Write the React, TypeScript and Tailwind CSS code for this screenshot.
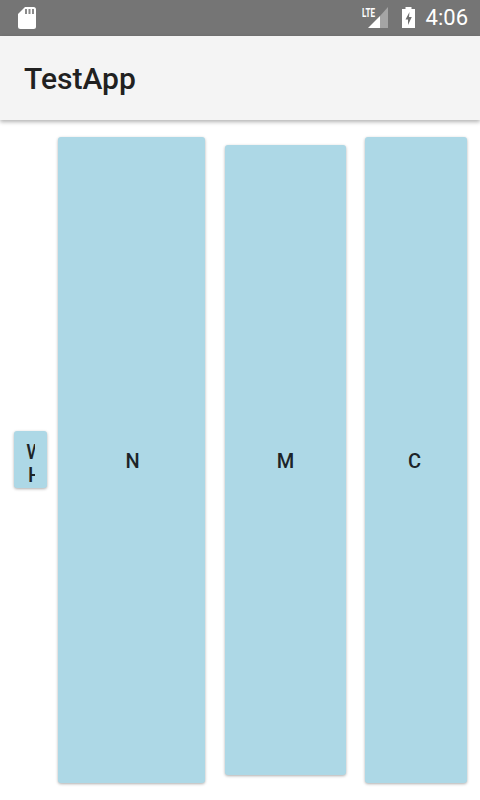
export default function App() {
  const cardBase = "flex items-center justify-center rounded-[3px] bg-[#add8e6] shadow-[0_1px_3px_rgba(0,0,0,0.32)] text-[#1c2428] text-[20px] font-medium leading-[28px]";
  return (
    <div className="flex h-[800px] w-[480px] flex-col overflow-hidden bg-white" style={{ fontFamily: "Roboto, sans-serif" }}>
      <div className="flex h-9 shrink-0 items-center bg-[#757575] text-white">
        <svg className="ml-[18px]" width="18" height="22" viewBox="0 0 18 22">
          <path d="M7 0H15.5Q18 0 18 2.5V19.5Q18 22 15.5 22H2.5Q0 22 0 19.5V7Z" fill="#fff" />
          <rect x="7" y="2" width="2" height="5" fill="#8a8a8a" />
          <rect x="10.5" y="2" width="2" height="5" fill="#8a8a8a" />
          <rect x="14" y="2" width="2" height="5" fill="#8a8a8a" />
        </svg>
        <div className="ml-auto flex items-center">
          <svg width="26" height="21" viewBox="0 0 26 21" className="mr-[14px] mt-[-1px]">
            <path d="M26 0V21H18V9Z" fill="#fff" fillOpacity="0.35" />
            <path d="M18 9V21H6Z" fill="#fff" />
            <text x="0" y="10" fontSize="13" fontWeight="700" fill="#fff" textLength="13" lengthAdjust="spacingAndGlyphs" fontFamily="Roboto, sans-serif">LTE</text>
          </svg>
          <svg width="13" height="21" viewBox="0 0 13 21" className="mr-[11px] mt-[-1px]">
            <path d="M3.5 0H9.5V2H13V21H0V2H3.5Z" fill="#fff" />
            <path d="M7.5 5L3.5 12.5H6V18L9.8 10H7Z" fill="#6f6f6f" />
          </svg>
          <span className="mr-3 text-[22px] leading-none">4:06</span>
        </div>
      </div>
      <header className="z-10 flex h-[84px] shrink-0 items-center bg-[#f4f4f4] pl-6 pt-[2px] shadow-[0_2px_4px_rgba(0,0,0,0.3)]">
        <h1 className="text-[30px] font-medium leading-none text-[#212121]">TestApp</h1>
      </header>
      <main className="flex flex-1 items-center pl-[14px]">
        <div className={cardBase + " mb-[1px] h-[57px] w-[33px] pt-[9px]"}>
          <div className="w-[9px] overflow-hidden">
            <div className="w-[18px] text-center leading-[23px]">W</div>
            <div className="w-[18px] text-center leading-[23px]">H</div>
          </div>
        </div>
        <div className={cardBase + " ml-[11px] h-[646px] w-[147px] pl-[2px] pt-[2px]"}>N</div>
        <div className={cardBase + " ml-[20px] h-[630px] w-[121px] pt-[2px]"}>M</div>
        <div className={cardBase + " ml-[19px] h-[646px] w-[102px] pr-[3px] pt-[2px]"}>C</div>
      </main>
    </div>
  );
}
